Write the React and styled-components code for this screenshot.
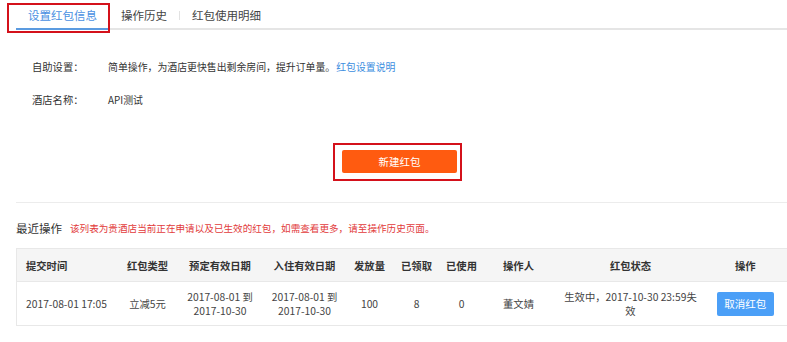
import React from 'react';
import styled, { createGlobalStyle } from 'styled-components';

const GlobalStyle = createGlobalStyle`
  html, body {
    margin: 0;
    padding: 0;
    background: #fff;
  }
  body {
    font-family: "Noto Sans CJK SC", "Liberation Sans", sans-serif;
    color: #333;
  }
`;

const columns = [
  { key: 'time', title: '提交时间', width: 98, align: 'left' },
  { key: 'type', title: '红包类型', width: 66 },
  { key: 'book', title: '预定有效日期', width: 79 },
  { key: 'stay', title: '入住有效日期', width: 90 },
  { key: 'issued', title: '发放量', width: 40 },
  { key: 'taken', title: '已领取', width: 54 },
  { key: 'used', title: '已使用', width: 36 },
  { key: 'operator', title: '操作人', width: 78 },
  { key: 'status', title: '红包状态', width: 146 },
  { key: 'action', title: '操作', width: 84 },
];

const rows = [
  {
    time: '2017-08-01 17:05',
    type: '立减5元',
    book: '2017-08-01 到 2017-10-30',
    stay: '2017-08-01 到 2017-10-30',
    issued: '100',
    taken: '8',
    used: '0',
    operator: '董文婧',
    status: '生效中，2017-10-30 23:59失效',
  },
];

const App = () => {
  return (
    <>
      <GlobalStyle />
      <Page>
        <TabBar>
          <Tab $active>
            设置红包信息
            <TabMark />
          </Tab>
          <Tab>操作历史</Tab>
          <TabDivider />
          <Tab>红包使用明细</Tab>
        </TabBar>

        <Form>
          <FieldRow>
            <Label>自助设置：</Label>
            <Value>
              简单操作，为酒店更快售出剩余房间，提升订单量。<Link>红包设置说明</Link>
            </Value>
          </FieldRow>
          <FieldRow>
            <Label>酒店名称：</Label>
            <Value>API测试</Value>
          </FieldRow>
        </Form>

        <ButtonArea>
          <PrimaryButton>
            新建红包
            <ButtonMark />
          </PrimaryButton>
        </ButtonArea>

        <Divider />

        <SectionTitle>
          最近操作
          <Notice>该列表为贵酒店当前正在申请以及已生效的红包，如需查看更多，请至操作历史页面。</Notice>
        </SectionTitle>

        <Table>
          <colgroup>
            {columns.map((c) => (
              <Col key={c.key} $width={c.width} />
            ))}
          </colgroup>
          <thead>
            <tr>
              {columns.map((c) => (
                <HeadCell key={c.key} $align={c.align}>
                  {c.title}
                </HeadCell>
              ))}
            </tr>
          </thead>
          <tbody>
            {rows.map((r, i) => (
              <tr key={i}>
                {columns.map((c) => (
                  <Cell key={c.key} $align={c.align}>
                    {c.key === 'action' ? <CancelButton>取消红包</CancelButton> : r[c.key]}
                  </Cell>
                ))}
              </tr>
            ))}
          </tbody>
        </Table>
      </Page>
    </>
  );
};

// --- STYLES ---

const Page = styled.div`
  width: 787px;
  height: 342px;
  overflow: hidden;
  font-size: 10.3px;
`;

const TabBar = styled.div`
  display: flex;
  align-items: flex-start;
  margin-left: 16px;
  height: 28px;
  border-bottom: 2px solid #e5e5e5;
`;

const Tab = styled.div`
  position: relative;
  box-sizing: border-box;
  height: 30px;
  margin-bottom: -2px;
  padding: 2px 12px 0;
  line-height: 26px;
  font-size: 11.5px;
  color: ${(p) => (p.$active ? '#4a90e2' : '#444')};
  border-bottom: 2px solid ${(p) => (p.$active ? '#5b9be0' : 'transparent')};
  white-space: nowrap;
`;

const TabDivider = styled.span`
  width: 1px;
  height: 9px;
  margin-top: 11px;
  background: #e2e2e2;
`;

/* red annotation frames drawn over the screenshot */
const TabMark = styled.span`
  position: absolute;
  left: -9px;
  top: 3px;
  width: 103px;
  height: 30px;
  box-sizing: border-box;
  border: 2px solid #d4111b;
`;

const ButtonMark = styled.span`
  position: absolute;
  left: -9px;
  top: -7px;
  width: 129px;
  height: 38px;
  box-sizing: border-box;
  border: 2px solid #d4111b;
`;

const Form = styled.div`
  padding: 20px 0 0 32px;
`;

const FieldRow = styled.div`
  display: flex;
  height: 33px;
  align-items: center;
`;

const Label = styled.span`
  width: 76px;
  color: #333;
`;

const Value = styled.span`
  font-size: 9.9px;
  color: #333;
`;

const Link = styled.a`
  color: #3b8de0;
  margin-left: 1px;
  cursor: pointer;
`;

const ButtonArea = styled.div`
  display: flex;
  justify-content: center;
  padding-left: 12px;
  margin-top: 34px;
`;

const PrimaryButton = styled.button`
  position: relative;
  width: 115px;
  height: 23px;
  border: none;
  border-radius: 2px;
  background: #ff5b10;
  color: #fff;
  font-family: inherit;
  font-size: 10.5px;
  padding: 0;
  cursor: pointer;
`;

const Divider = styled.div`
  margin: 29px 0 0 16px;
  height: 1px;
  background: #ececec;
`;

const SectionTitle = styled.div`
  display: flex;
  align-items: center;
  margin: 15px 0 0 16px;
  height: 20px;
  font-size: 11.5px;
  color: #333;
`;

const Notice = styled.span`
  margin-left: 8px;
  font-size: 9.6px;
  color: #e23b3b;
`;

const Table = styled.table`
  margin: 10px 0 0 16px;
  width: 772px;
  table-layout: fixed;
  border-collapse: collapse;
  border: 1px solid #e8e8e8;
`;

const Col = styled.col`
  width: ${(p) => p.$width}px;
`;

const HeadCell = styled.th`
  height: 32px;
  padding: 0 ${(p) => (p.$align === 'left' ? '0 0 9px' : '2px')};
  background: #f5f5f5;
  border-bottom: 1px solid #e8e8e8;
  text-align: ${(p) => p.$align || 'center'};
  font-weight: bold;
  color: #333;
  white-space: nowrap;
`;

const Cell = styled.td`
  height: 43px;
  padding: ${(p) => (p.$align === 'left' ? '0 0 0 9px' : '0 3px')};
  text-align: ${(p) => p.$align || 'center'};
  line-height: 14px;
  color: #444;
`;

const CancelButton = styled.button`
  width: 57px;
  height: 24px;
  border: none;
  border-radius: 2px;
  background: #4b9ff7;
  color: #fff;
  font-family: inherit;
  font-size: 10.5px;
  padding: 0;
  cursor: pointer;
`;

export default App;
